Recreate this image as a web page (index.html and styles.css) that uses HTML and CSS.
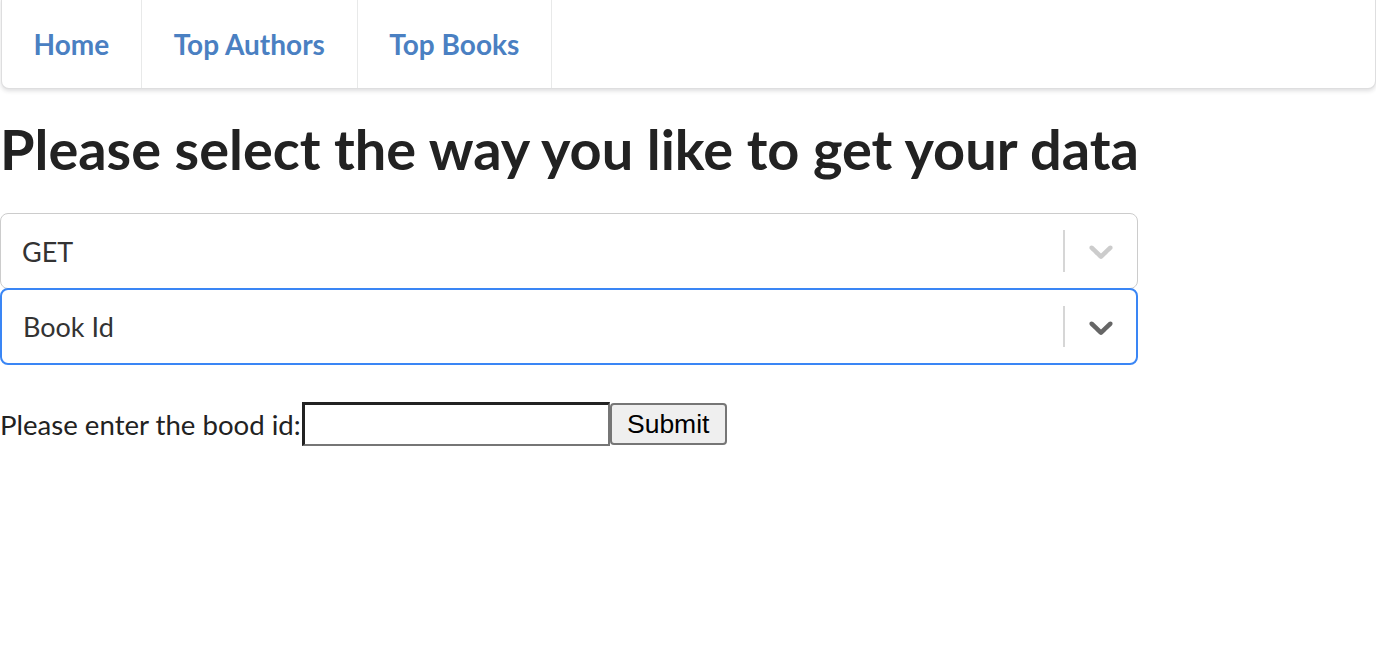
FILE: index.html
```html
<!DOCTYPE html>
<html>
<head>
<meta charset="utf-8">
<link rel="stylesheet" href="styles.css">
</head>
<body>
<nav class="menu">
  <a class="item">Home</a>
  <a class="item">Top Authors</a>
  <a class="item">Top Books</a>
</nav>
<h1 class="title">Please select the way you like to get your data</h1>
<div class="select">
  <div class="value">GET</div>
  <div class="indicators">
    <span class="sep"></span>
    <span class="ind"><svg width="40" height="40" viewBox="0 0 20 20"><path fill="#cccccc" d="M4.516 7.548c0.436-0.446 1.043-0.481 1.576 0l3.908 3.747 3.908-3.747c0.533-0.481 1.141-0.446 1.574 0 0.436 0.445 0.408 1.197 0 1.615-0.406 0.418-4.695 4.502-4.695 4.502-0.217 0.223-0.502 0.335-0.787 0.335s-0.57-0.112-0.789-0.335c0 0-4.287-4.084-4.695-4.502s-0.436-1.170 0-1.615z"/></svg></span>
  </div>
</div>
<div class="select focused">
  <div class="value">Book Id</div>
  <div class="indicators">
    <span class="sep"></span>
    <span class="ind"><svg width="40" height="40" viewBox="0 0 20 20"><path fill="#666666" d="M4.516 7.548c0.436-0.446 1.043-0.481 1.576 0l3.908 3.747 3.908-3.747c0.533-0.481 1.141-0.446 1.574 0 0.436 0.445 0.408 1.197 0 1.615-0.406 0.418-4.695 4.502-4.695 4.502-0.217 0.223-0.502 0.335-0.787 0.335s-0.57-0.112-0.789-0.335c0 0-4.287-4.084-4.695-4.502s-0.436-1.170 0-1.615z"/></svg></span>
  </div>
</div>
<form class="form">
  <label class="label">Please enter the bood id:</label><input class="input" type="text"><button class="btn" type="button">Submit</button>
</form>
</body>
</html>
```
FILE: styles.css
```css
html, body {
  margin: 0;
  padding: 0;
  background: #ffffff;
}
body {
  font-family: Lato, "Open Sans", sans-serif;
  font-size: 28px;
  color: rgba(0, 0, 0, 0.87);
}
.menu {
  display: flex;
  margin: -2px 0 0 1px;
  border: 1px solid rgba(34, 36, 38, 0.15);
  border-radius: 0 0 8px 8px;
  box-shadow: 0 2px 4px 0 rgba(34, 36, 38, 0.15);
  background: #fff;
}
.item {
  display: block;
  padding: 31px 32px 30px 31.5px;
  font-size: 28px;
  line-height: 28px;
  font-weight: 700;
  color: #4a80c2;
  border-right: 1px solid rgba(34, 36, 38, 0.1);
}
.title {
  margin: 24px 0 28px;
  font-size: 55.9px;
  line-height: 72px;
  font-weight: 700;
  color: #222222;
}
.select {
  box-sizing: border-box;
  width: 1138px;
  height: 76px;
  display: flex;
  align-items: center;
  border: 1px solid #cccccc;
  border-radius: 8px;
  background: #fff;
}
.select.focused {
  border: 2px solid #3a86f5;
  height: 77px;
  margin-top: -1px;
}
.value {
  flex: 1;
  padding-left: 21px;
  font-size: 27px;
  color: #333333;
}
.indicators {
  display: flex;
  align-items: center;
  align-self: stretch;
}
.sep {
  width: 2px;
  align-self: stretch;
  margin: 16px 0;
  background: #d6d6d6;
}
.ind {
  display: flex;
  padding: 0 16px;
}
.focused .ind {
  padding-right: 15px;
}
.form {
  display: flex;
  align-items: center;
  margin-top: 37px;
}
.label {
  font-size: 27.6px;
  color: #222;
}
.input {
  box-sizing: border-box;
  width: 308px;
  height: 44px;
  margin: 0 0 0 1px;
  border-style: solid;
  border-width: 3px 2px 2px 3px;
  border-color: #222 #767676 #767676 #222;
  background: #fff;
}
.btn {
  box-sizing: border-box;
  width: 117px;
  height: 42px;
  margin: 0;
  font-family: "Liberation Sans", Arial, sans-serif;
  font-size: 26.5px;
  color: #000;
  background: #efefef;
  border: 2px solid #767676;
  border-radius: 4px;
}
```
